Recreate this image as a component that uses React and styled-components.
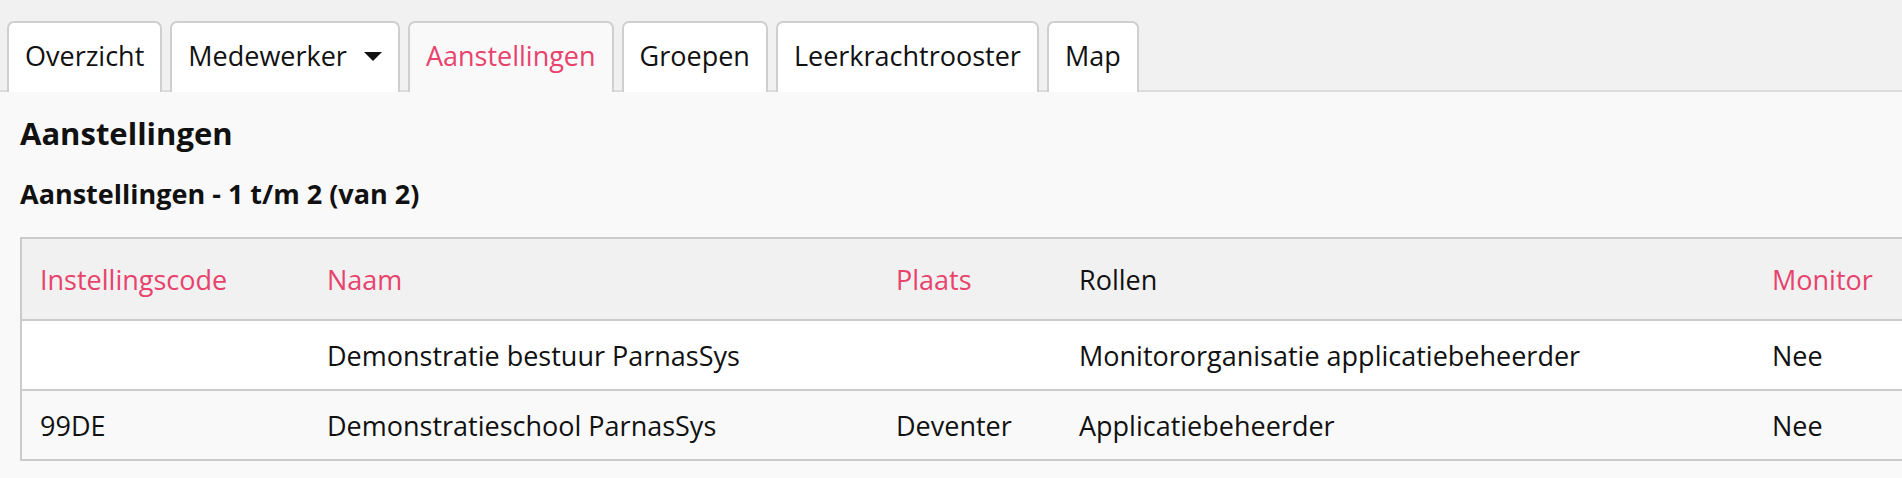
import React from "react";
import styled, { createGlobalStyle } from "styled-components";

const GlobalStyle = createGlobalStyle`
  html, body {
    margin: 0;
    padding: 0;
    background: #f1f1f1;
    overflow: hidden;
  }
  body {
    font-family: "Open Sans", "Noto Sans", sans-serif;
    color: #111;
  }
`;

const Page = styled.div`
  width: 1902px;
  height: 478px;
  overflow: hidden;
`;

const TabBar = styled.div`
  display: flex;
  gap: 8px;
  padding: 21px 0 0 7px;
  margin-bottom: -2px;
`;

const Tab = styled.div`
  position: relative;
  z-index: 1;
  display: flex;
  align-items: center;
  gap: 17px;
  height: 71px;
  box-sizing: border-box;
  padding: 0 16px 4px;
  border: 2px solid #cfcfcf;
  border-bottom: none;
  border-radius: 7px 7px 0 0;
  background: ${props => (props.active ? "#f9f9f9" : "#fff")};
  color: ${props => (props.active ? "#e8436d" : "#111")};
  font-size: 27px;
  cursor: pointer;
`;

const Caret = styled.span`
  width: 0;
  height: 0;
  border-left: 9px solid transparent;
  border-right: 9px solid transparent;
  border-top: 9px solid #111;
  margin-top: 2px;
`;

const Panel = styled.div`
  background: #f9f9f9;
  border-top: 2px solid #dcdcdc;
  padding: 21px 0 0 20px;
  height: 400px;
`;

const Heading = styled.h1`
  margin: 0;
  font-size: 31px;
  line-height: 40px;
  font-weight: 700;
`;

const SubHeading = styled.h2`
  margin: 24px 0 26px;
  font-size: 27px;
  line-height: 34px;
  font-weight: 700;
`;

const Table = styled.table`
  border-collapse: collapse;
  table-layout: fixed;
  width: 1900px;
  border: 2px solid #cbcbcb;
  font-size: 27px;
`;

const HeadCell = styled.th`
  text-align: left;
  font-weight: 500;
  height: 80px;
  padding: 0 18px;
  background: #f1f1f1;
  border-bottom: 2px solid #cbcbcb;
  color: ${props => (props.sortable ? "#e8436d" : "#111")};
`;

const Row = styled.tr`
  background: ${props => (props.odd ? "#fff" : "#f9f9f9")};
  border-bottom: 2px solid #cbcbcb;
`;

const Cell = styled.td`
  height: 68px;
  padding: 0 18px;
  white-space: nowrap;
`;

const tabs = [
  { label: "Overzicht" },
  { label: "Medewerker", dropdown: true },
  { label: "Aanstellingen", active: true },
  { label: "Groepen" },
  { label: "Leerkrachtrooster" },
  { label: "Map" },
];

const columns = [
  { label: "Instellingscode", width: 288, sortable: true },
  { label: "Naam", width: 569, sortable: true },
  { label: "Plaats", width: 183, sortable: true },
  { label: "Rollen", width: 693 },
  { label: "Monitor", width: 167, sortable: true },
];

const rows = [
  ["", "Demonstratie bestuur ParnasSys", "", "Monitororganisatie applicatiebeheerder", "Nee"],
  ["99DE", "Demonstratieschool ParnasSys", "Deventer", "Applicatiebeheerder", "Nee"],
];

export default function App() {
  return (
    <Page>
      <GlobalStyle />
      <TabBar>
        {tabs.map(t => (
          <Tab key={t.label} active={t.active}>
            {t.label}
            {t.dropdown && <Caret />}
          </Tab>
        ))}
      </TabBar>
      <Panel>
        <Heading>Aanstellingen</Heading>
        <SubHeading>Aanstellingen - 1 t/m 2 (van 2)</SubHeading>
        <Table>
          <colgroup>
            {columns.map(c => (
              <col key={c.label} style={{ width: c.width }} />
            ))}
          </colgroup>
          <thead>
            <tr>
              {columns.map(c => (
                <HeadCell key={c.label} sortable={c.sortable}>
                  {c.label}
                </HeadCell>
              ))}
            </tr>
          </thead>
          <tbody>
            {rows.map((r, i) => (
              <Row key={i} odd={i % 2 === 0}>
                {r.map((v, j) => (
                  <Cell key={j}>{v}</Cell>
                ))}
              </Row>
            ))}
          </tbody>
        </Table>
      </Panel>
    </Page>
  );
}
